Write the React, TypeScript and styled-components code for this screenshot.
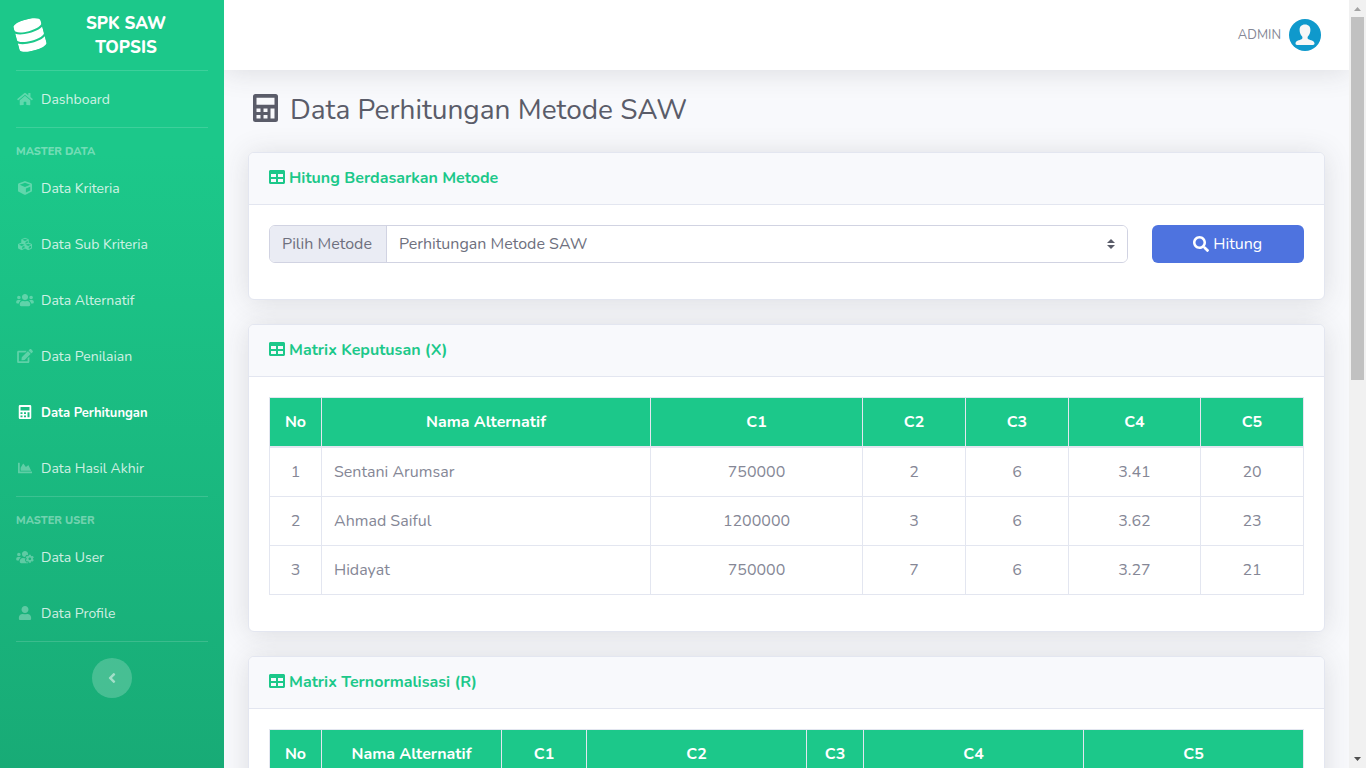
import React from "react";
import styled, { createGlobalStyle } from "styled-components";
import {
  FaAngleLeft,
  FaChartArea,
  FaCube,
  FaCubes,
  FaDatabase,
  FaEdit,
  FaHome,
  FaSearch,
  FaTable,
  FaUser,
  FaUsers,
  FaUsersCog,
} from "react-icons/fa";

const Global = createGlobalStyle`
  *, *::before, *::after { box-sizing: border-box; }
  body {
    margin: 0;
    background: #f8f9fc;
    color: #858796;
    font-family: Nunito, "Open Sans", sans-serif;
    font-size: 16px;
    line-height: 24px;
  }
  svg { display: block; }
`;

const Shell = styled.div`
  display: flex;
  height: 100vh;
  overflow: hidden;
`;

/* ---------- sidebar ---------- */

const Sidebar = styled.nav`
  flex: 0 0 224px;
  background: linear-gradient(180deg, #1cc88a 20%, #18ab76 100%);
  color: #fff;
  overflow: hidden;
`;

const Brand = styled.a`
  display: flex;
  align-items: center;
  height: 70px;
  padding: 0 16px;
  color: #fff;
  text-decoration: none;
  text-align: center;
  font-size: 17px;
  font-weight: 800;
`;

const BrandIcon = styled(FaDatabase)`
  flex: none;
  width: 28px;
  height: 32px;
  transform: rotate(-15deg);
`;

const BrandText = styled.span`
  flex: 1;
  margin: 0 16px;
  padding-top: 2px;
`;

const Divider = styled.hr<{ $gap?: boolean }>`
  height: 1px;
  margin: 0 16px ${(p) => (p.$gap ? 16 : 0)}px;
  border: 0;
  background: rgba(255, 255, 255, 0.15);
`;

const NavHeading = styled.h2`
  margin: 0;
  padding: 0 16px;
  color: rgba(255, 255, 255, 0.4);
  font-size: 11px;
  line-height: 16px;
  font-weight: 800;
`;

const NavList = styled.ul`
  margin: 0;
  padding: 0;
  list-style: none;
`;

const NavLink = styled.a<{ $active?: boolean }>`
  display: flex;
  align-items: center;
  gap: 7px;
  padding: 16px;
  color: ${(p) => (p.$active ? "#fff" : "rgba(255, 255, 255, 0.8)")};
  font-size: ${(p) => (p.$active ? 13 : 14)}px;
  font-weight: ${(p) => (p.$active ? 700 : 400)};
  text-decoration: none;

  svg {
    width: 18px;
    height: 14px;
    color: ${(p) => (p.$active ? "#fff" : "rgba(255, 255, 255, 0.3)")};
  }
`;

const NavLabel = styled.span`
  padding-top: 2px;
  line-height: 22px;
`;

const Toggle = styled.button`
  display: flex;
  align-items: center;
  justify-content: center;
  width: 40px;
  height: 40px;
  margin: 16px auto;
  padding: 0;
  border: 0;
  border-radius: 50%;
  background: rgba(255, 255, 255, 0.2);
  color: rgba(255, 255, 255, 0.5);
  font-size: 16px;
`;

/* ---------- main column ---------- */

const Main = styled.div`
  flex: 1;
  min-width: 0;
  overflow-y: auto;
  scrollbar-width: none;
`;

const Topbar = styled.header`
  display: flex;
  align-items: center;
  justify-content: flex-end;
  height: 70px;
  margin-bottom: 24px;
  padding: 0 28px;
  background: #fff;
  box-shadow: 0 2px 28px 0 rgba(58, 59, 69, 0.15);
`;

const UserLink = styled.a`
  display: flex;
  align-items: center;
  gap: 8px;
  color: #858796;
  font-size: 13px;
  text-decoration: none;
`;

const Content = styled.main`
  display: flex;
  flex-direction: column;
  gap: 24px;
  padding: 0 24px 24px;
`;

const PageTitle = styled.h1`
  display: flex;
  align-items: flex-start;
  gap: 7px;
  margin: 0;
  padding-bottom: 2px;
  color: #5a5c69;
  font-size: 28px;
  line-height: 32px;
  font-weight: 400;

  svg {
    width: 35px;
    height: 28px;
  }
`;

const Card = styled.section`
  border: 1px solid #e3e6f0;
  border-radius: 6px;
  background: #fff;
  box-shadow: 0 2px 28px 0 rgba(58, 59, 69, 0.15);
`;

const CardHeader = styled.h2`
  display: flex;
  align-items: flex-start;
  gap: 4px;
  margin: 0;
  padding: 16px 20px;
  border-bottom: 1px solid #e3e6f0;
  border-radius: 5px 5px 0 0;
  background: #f8f9fc;
  color: #1cc88a;
  font-size: 16px;
  line-height: 19px;
  font-weight: 700;
`;

const CardBody = styled.div`
  padding: 20px 20px 36px;
`;

const MethodForm = styled.form`
  display: grid;
  grid-template-columns: repeat(12, minmax(0, 1fr));
  gap: 24px;
`;

const InputGroup = styled.div`
  grid-column: span 10;
  display: flex;
  height: 38px;
  border: 1px solid #d1d3e2;
  border-radius: 6px;
  overflow: hidden;
`;

const GroupLabel = styled.label`
  display: flex;
  align-items: center;
  padding: 0 14px 0 12px;
  border-right: 1px solid #d1d3e2;
  background: #eaecf4;
  color: #6e707e;
`;

const SelectWrap = styled.div`
  position: relative;
  flex: 1;
  display: flex;
`;

const Select = styled.select`
  flex: 1;
  appearance: none;
  padding: 0 28px 0 12px;
  border: 0;
  background: #fff;
  color: #6e707e;
  font: inherit;
`;

const SelectArrows = styled.svg`
  position: absolute;
  right: 12px;
  top: 13px;
  width: 8px;
  height: 10px;
  fill: #5a5c69;
  pointer-events: none;
`;

const SubmitButton = styled.button`
  grid-column: span 2;
  display: flex;
  align-items: center;
  justify-content: center;
  gap: 4px;
  height: 38px;
  padding: 0 12px;
  border: 0;
  border-radius: 6px;
  background: #4e73df;
  color: #fff;
  font: inherit;
`;

const Table = styled.table`
  width: 100%;
  border-collapse: collapse;
  table-layout: fixed;
`;

const Col = styled.col<{ $share: number }>`
  width: ${(p) => p.$share * 100}%;
`;

const Th = styled.th`
  padding: 12px;
  border: 1px solid #e3e6f0;
  border-bottom-width: 2px;
  background: #1cc88a;
  color: #fff;
  font-weight: 700;
`;

const Td = styled.td<{ $left?: boolean }>`
  padding: 12px;
  border: 1px solid #e3e6f0;
  text-align: ${(p) => (p.$left ? "left" : "center")};
`;

/* ---------- scroll bar ---------- */

const ScrollTrack = styled.div`
  flex: 0 0 17px;
  display: flex;
  flex-direction: column;
  background: #f1f1f1;
`;

const ScrollArrow = styled.svg`
  flex: none;
  width: 17px;
  height: 17px;
`;

const ScrollLane = styled.div`
  flex: 1;
  padding: 0 2px;
`;

const ScrollThumb = styled.div`
  height: 49.5%;
  background: #c1c1c1;
`;

/* ---------- drawings ---------- */

function CalculatorIcon() {
  return (
    <svg viewBox="0 0 25 28" fill="currentColor" aria-hidden="true">
      <path
        fillRule="evenodd"
        d="M2.500 0h20A2.500 2.500 0 0 1 25 2.500v23a2.500 2.500 0 0 1-2.500 2.500h-20A2.500 2.500 0 0 1 0 25.500v-23A2.500 2.500 0 0 1 2.500 0zM3.500 3.800v7h18v-7zM3.500 14.500v3.500h4v-3.500zM10.500 14.500v3.500h4v-3.500zM17.500 14.500v10h4v-10zM3.500 21v3.500h4V21zM10.500 21v3.500h4V21z"
      />
    </svg>
  );
}

function Avatar() {
  return (
    <svg width="32" height="32" viewBox="0 0 32 32" aria-hidden="true">
      <circle cx="16" cy="16" r="16" fill="#0f99cc" />
      <path
        fill="#f7f7f7"
        d="M16 5.500c-3.700 0-5.400 2.300-5.400 5.400 0 2.900 1.200 4.900 2.400 6.300.7.900.6 2.500-.4 3C10.600 21.300 7 21.300 6.500 24.300c-.1 1.100.6 1.700 1.500 1.700h16c.9 0 1.600-.6 1.500-1.700-.5-3-4.100-3-6.100-4.100-1-.5-1.100-2.100-.4-3 1.200-1.400 2.400-3.400 2.400-6.300 0-3.100-1.700-5.400-5.400-5.400z"
      />
    </svg>
  );
}

/* ---------- data ---------- */

type NavEntry = { label: string; icon: React.ComponentType; active?: boolean };

const masterData: NavEntry[] = [
  { label: "Data Kriteria", icon: FaCube },
  { label: "Data Sub Kriteria", icon: FaCubes },
  { label: "Data Alternatif", icon: FaUsers },
  { label: "Data Penilaian", icon: FaEdit },
  { label: "Data Perhitungan", icon: CalculatorIcon, active: true },
  { label: "Data Hasil Akhir", icon: FaChartArea },
];

const masterUser: NavEntry[] = [
  { label: "Data User", icon: FaUsersCog },
  { label: "Data Profile", icon: FaUser },
];

const columns = ["No", "Nama Alternatif", "C1", "C2", "C3", "C4", "C5"];

const decisionRows = [
  ["1", "Sentani Arumsar", "750000", "2", "6", "3.41", "20"],
  ["2", "Ahmad Saiful", "1200000", "3", "6", "3.62", "23"],
  ["3", "Hidayat", "750000", "7", "6", "3.27", "21"],
];

/* ---------- composed parts ---------- */

function NavItems({ items }: { items: NavEntry[] }) {
  return (
    <NavList>
      {items.map(({ label, icon: Icon, active }) => (
        <li key={label}>
          <NavLink href="#" $active={active} aria-current={active ? "page" : undefined}>
            <Icon />
            <NavLabel>{label}</NavLabel>
          </NavLink>
        </li>
      ))}
    </NavList>
  );
}

function Matrix({ weights, rows }: { weights: number[]; rows: string[][] }) {
  const total = weights.reduce((sum, w) => sum + w, 0);
  return (
    <Table>
      <colgroup>
        {weights.map((w, i) => (
          <Col key={columns[i]} $share={w / total} />
        ))}
      </colgroup>
      <thead>
        <tr>
          {columns.map((name) => (
            <Th key={name} scope="col">
              {name}
            </Th>
          ))}
        </tr>
      </thead>
      <tbody>
        {rows.map((row) => (
          <tr key={row[0]}>
            {row.map((cell, i) => (
              <Td key={columns[i]} $left={i === 1}>
                {cell}
              </Td>
            ))}
          </tr>
        ))}
      </tbody>
    </Table>
  );
}

function Panel({ title, children }: { title: string; children: React.ReactNode }) {
  return (
    <Card>
      <CardHeader>
        <FaTable />
        {title}
      </CardHeader>
      <CardBody>{children}</CardBody>
    </Card>
  );
}

export default function App() {
  return (
    <>
      <Global />
      <Shell>
        <Sidebar>
          <Brand href="#">
            <BrandIcon />
            <BrandText>SPK SAW TOPSIS</BrandText>
          </Brand>
          <Divider />
          <NavItems items={[{ label: "Dashboard", icon: FaHome }]} />
          <Divider $gap />
          <NavHeading>MASTER DATA</NavHeading>
          <NavItems items={masterData} />
          <Divider $gap />
          <NavHeading>MASTER USER</NavHeading>
          <NavItems items={masterUser} />
          <Divider $gap />
          <Toggle type="button" aria-label="Toggle sidebar">
            <FaAngleLeft />
          </Toggle>
        </Sidebar>

        <Main>
          <Topbar>
            <UserLink href="#">
              ADMIN
              <Avatar />
            </UserLink>
          </Topbar>
          <Content>
            <PageTitle>
              <CalculatorIcon />
              Data Perhitungan Metode SAW
            </PageTitle>

            <Panel title="Hitung Berdasarkan Metode">
              <MethodForm>
                <InputGroup>
                  <GroupLabel htmlFor="metode">Pilih Metode</GroupLabel>
                  <SelectWrap>
                    <Select id="metode">
                      <option>Perhitungan Metode SAW</option>
                    </Select>
                    <SelectArrows viewBox="0 0 4 5" aria-hidden="true">
                      <path d="M2 0L0 2h4zm0 5L0 3h4z" />
                    </SelectArrows>
                  </SelectWrap>
                </InputGroup>
                <SubmitButton type="button">
                  <FaSearch />
                  Hitung
                </SubmitButton>
              </MethodForm>
            </Panel>

            <Panel title="Matrix Keputusan (X)">
              <Matrix weights={[52, 329, 212, 103, 103, 132, 103]} rows={decisionRows} />
            </Panel>

            <Panel title="Matrix Ternormalisasi (R)">
              <Matrix weights={[52, 180, 85, 220, 57, 220, 220]} rows={[]} />
            </Panel>
          </Content>
        </Main>

        <ScrollTrack aria-hidden="true">
          <ScrollArrow viewBox="0 0 17 17" fill="#a3a3a3">
            <path d="M5 11h7L8.500 7z" />
          </ScrollArrow>
          <ScrollLane>
            <ScrollThumb />
          </ScrollLane>
          <ScrollArrow viewBox="0 0 17 17" fill="#505050">
            <path d="M5 6h7l-3.500 4z" />
          </ScrollArrow>
        </ScrollTrack>
      </Shell>
    </>
  );
}
